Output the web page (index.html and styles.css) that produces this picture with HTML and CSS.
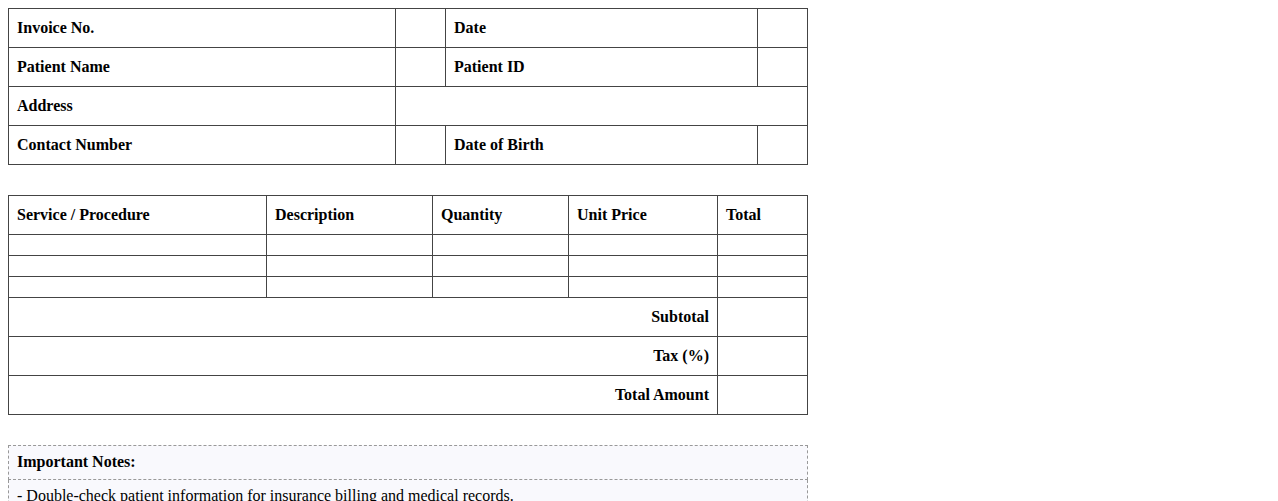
FILE: index.html
```html
<!DOCTYPE html>
<html>
<head>
<meta charset="utf-8">
<link rel="stylesheet" href="styles.css">
</head>
<body>
<table class="grid info">
  <colgroup><col class="c1"><col class="c2"><col class="c3"><col class="c4"></colgroup>
  <tr><th>Invoice No.</th><td></td><th>Date</th><td></td></tr>
  <tr><th>Patient Name</th><td></td><th>Patient ID</th><td></td></tr>
  <tr><th>Address</th><td colspan="3"></td></tr>
  <tr><th>Contact Number</th><td></td><th>Date of Birth</th><td></td></tr>
</table>

<table class="grid items">
  <colgroup><col class="i1"><col class="i2"><col class="i3"><col class="i4"><col class="i5"></colgroup>
  <tr><th>Service / Procedure</th><th>Description</th><th>Quantity</th><th>Unit Price</th><th>Total</th></tr>
  <tr><td></td><td></td><td></td><td></td><td></td></tr>
  <tr><td></td><td></td><td></td><td></td><td></td></tr>
  <tr><td></td><td></td><td></td><td></td><td></td></tr>
  <tr><th colspan="4" class="right">Subtotal</th><td></td></tr>
  <tr><th colspan="4" class="right">Tax (%)</th><td></td></tr>
  <tr><th colspan="4" class="right">Total Amount</th><td></td></tr>
</table>

<table class="notes">
  <tr><th>Important Notes:</th></tr>
  <tr><td>- Double-check patient information for insurance billing and medical records.</td></tr>
</table>
</body>
</html>
```

FILE: styles.css
```css
body {
  margin: 8px;
  font-family: "Liberation Serif", "Times New Roman", serif;
  font-size: 16px;
  color: #000;
  background: #fff;
}
table {
  border-collapse: collapse;
  table-layout: fixed;
}
.grid {
  width: 799px;
}
.grid th, .grid td {
  border: 1px solid #444;
  padding: 10px 8px;
  text-align: left;
  font-weight: bold;
  line-height: 18px;
}
.grid .right { text-align: right; }
.info { margin-bottom: 30px; }
.items { margin-bottom: 30px; }
.c1 { width: 387px; }
.c2 { width: 50px; }
.c3 { width: 312px; }
.c4 { width: 50px; }
.i1 { width: 258px; }
.i2 { width: 166px; }
.i3 { width: 136px; }
.i4 { width: 149px; }
.i5 { width: 90px; }
.notes {
  width: 800px;
  background: #f9f9fd;
}
.notes th, .notes td {
  border: 1px dashed #999;
  padding: 7px 8px 8px;
  text-align: left;
  line-height: 18px;
}
.notes th { font-weight: bold; }
.notes td { font-weight: normal; }
```
